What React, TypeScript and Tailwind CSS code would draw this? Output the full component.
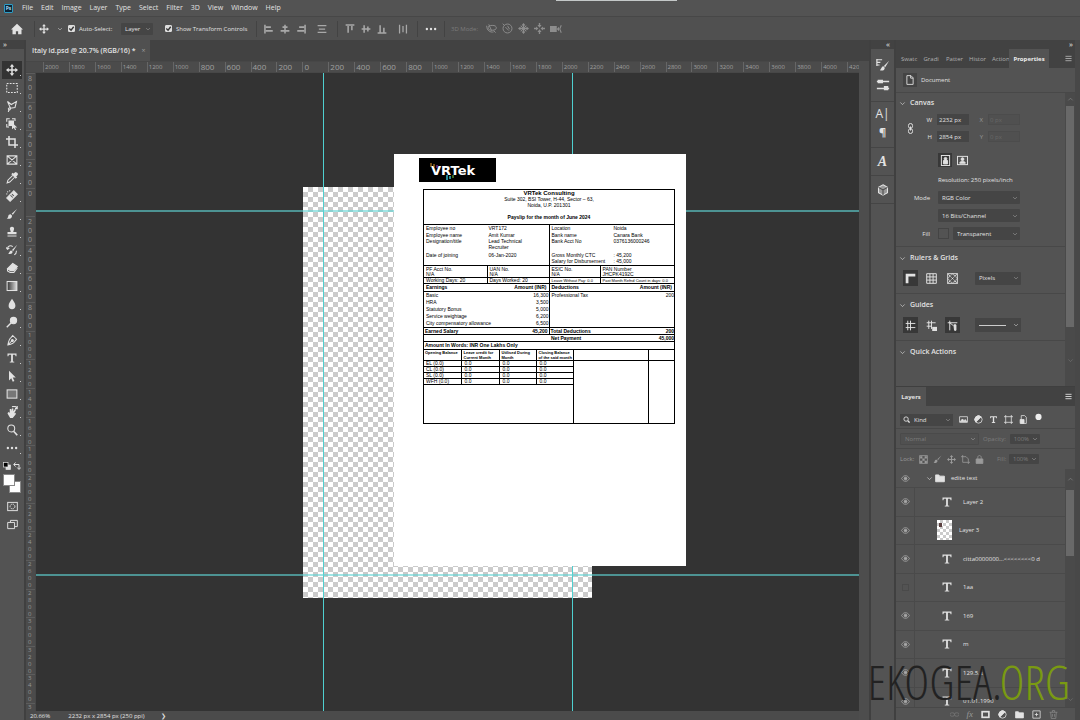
import { useState } from 'react';
import type { ReactNode } from 'react';
import clsx from 'clsx';

const MENUS = ['File', 'Edit', 'Image', 'Layer', 'Type', 'Select', 'Filter', '3D', 'View', 'Window', 'Help'];

const H_LABELS = Array.from({ length: 32 }, (_, i) => Math.abs(i * 200 - 2000));
const V_LABELS = Array.from({ length: 22 }, (_, i) => Math.abs(i * 200 - 800));

const Icon = ({ children, className = 'size-3' }: { children: ReactNode; className?: string }) => (
  <svg
    viewBox="0 0 16 16"
    className={clsx('shrink-0', className)}
    fill="none"
    stroke="currentColor"
    strokeWidth="1.4"
    aria-hidden="true"
  >
    {children}
  </svg>
);

const ChevronDown = ({ className = 'size-2' }: { className?: string }) => (
  <Icon className={className}>
    <path d="M3 5.5l5 5 5-5" />
  </Icon>
);

const Eye = () => (
  <Icon className="size-[9px]">
    <path d="M1 8c2-3.4 4.400-5 7-5s5 1.600 7 5c-2 3.400-4.400 5-7 5s-5-1.600-7-5z" />
    <circle cx="8" cy="8" r="2.400" fill="currentColor" />
  </Icon>
);

const moveIcon = (
  <g fill="currentColor" stroke="none">
    <path d="M8 0l3 3.600H9v3.400h3.400V5L16 8l-3.600 3V9H9v3.400h2L8 16l-3-3.600h2V9H3.600v2L0 8l3.600-3v2H7V3.600H5z" />
  </g>
);

const typeIcon = (
  <path fill="currentColor" stroke="none" d="M2 2h12v3.600h-1.200L12.200 3.800H9.200v8.700l1.800.5v1H5v-1l1.800-.5V3.800H3.800L3.200 5.600H2z" />
);

const brushIcon = (
  <g fill="currentColor" stroke="none">
    <path d="M15 1L7.600 7.500l1.500 1.600z" />
    <path d="M6.600 8.500c-2.300-.2-3.400 1-3.700 2.800C2.700 12.600 2 13.600 1 14c3 .9 7 .2 7.100-3.800z" />
  </g>
);

const TOOLS: { name: string; icon: ReactNode }[] = [
  { name: 'Move', icon: moveIcon },
  { name: 'Rectangular Marquee', icon: <rect x="1" y="2" width="14" height="12" strokeDasharray="2.400 1.600" /> },
  { name: 'Lasso', icon: <path d="M2 2l5 4 7-4-2 8-6 1-4-9zM6 11c-2-1-3.500 0-2.500 1.500S6 13 6 11zM4 13l-1 3" /> },
  {
    name: 'Object Selection',
    icon: (
      <>
        <path d="M1 5V1h4M8 1h4v3M1 8v4h3" />
        <rect x="4" y="4" width="6" height="6" fill="currentColor" />
        <path d="M8 6l7 6.500-3 .3L13.500 16 12 16l-1.500-3L8 15z" fill="currentColor" stroke="none" />
      </>
    ),
  },
  { name: 'Crop', icon: <path strokeWidth="2" d="M4 0v12h12M0 4h12v12" /> },
  { name: 'Frame', icon: <path d="M1.500 2.500h13v11h-13zM1.500 2.500l13 11M14.500 2.500l-13 11" /> },
  {
    name: 'Eyedropper',
    icon: (
      <>
        <path d="M9 4.500L2.500 11 1.500 14.500 5 13.500 11.500 7" />
        <path d="M8 3l5 5 1-1-1.200-1.200L15 3.500C15.500 2 14 .5 12.500 1L10.200 3.200 9 2z" fill="currentColor" />
      </>
    ),
  },
  {
    name: 'Healing Brush',
    icon: (
      <>
        <path d="M10.500 1l4.500 4.500L5.500 15 1 10.500z" fill="currentColor" />
        <path d="M1 6c0-3 2-5 5-5" strokeDasharray="1.500 1.500" />
        <path d="M6 7l3 3M8 5.500L10.500 8" stroke="#535353" />
      </>
    ),
  },
  { name: 'Brush', icon: brushIcon },
  {
    name: 'Clone Stamp',
    icon: <path fill="currentColor" stroke="none" d="M8 1c2 0 3.200 1.500 2.700 3.200L9.600 8H14v3H2V8h4.400L5.300 4.200C4.800 2.500 6 1 8 1zM2 12.500h12V14H2z" />,
  },
  {
    name: 'History Brush',
    icon: (
      <>
        <path d="M15 1L8 8l1.500 1.500zM7 8.500c-2 0-2 2-4 4.500 3 1 6 0 5.800-3z" fill="currentColor" stroke="none" />
        <path d="M9 3.500C6 1 2 3 2 6.500M0 4.500l2 2.500 2.500-1.500M14 9c0 3-1 4.500-3 5.500" />
      </>
    ),
  },
  {
    name: 'Eraser',
    icon: (
      <>
        <path d="M9 2l6 4-4.500 5.500H6L2 9z" fill="currentColor" />
        <path d="M2 9v3l3.500 2h5l4.500-6" />
      </>
    ),
  },
  {
    name: 'Gradient',
    icon: (
      <>
        <defs>
          <linearGradient id="gradTool">
            <stop offset="0" stopColor="#333" />
            <stop offset="1" stopColor="#ddd" />
          </linearGradient>
        </defs>
        <rect x="1.500" y="2" width="13" height="12" fill="url(#gradTool)" />
      </>
    ),
  },
  { name: 'Blur', icon: <path fill="currentColor" stroke="none" d="M8 1c2 3.400 4.500 6 4.500 9A4.500 4.500 0 0 1 8 15a4.500 4.500 0 0 1-4.500-5C3.500 7 6 4.400 8 1z" /> },
  {
    name: 'Dodge',
    icon: (
      <>
        <circle cx="10" cy="6" r="4.200" fill="currentColor" />
        <path strokeWidth="2" d="M7 9l-6 6" />
      </>
    ),
  },
  {
    name: 'Pen',
    icon: (
      <>
        <path d="M9 2l5 5-2 2.500c-1 2.500-4 4-9.500 5C3.500 9 4.500 6 7 4.500zM2.500 14.500L8 9" />
        <circle cx="8.500" cy="8.500" r="1.300" fill="currentColor" />
      </>
    ),
  },
  { name: 'Type', icon: typeIcon },
  { name: 'Path Selection', icon: <path fill="currentColor" stroke="none" d="M4 1l9 9H9l2.200 4.600L9 15.500 7 11l-3 3z" /> },
  { name: 'Rectangle', icon: <rect x="1.500" y="2.500" width="13" height="11" fill="#777" /> },
  {
    name: 'Rotate View',
    icon: (
      <>
        <path fill="currentColor" stroke="none" d="M3 8l2 1V4h2v3l1-4 2 .5L9.500 7 12 4l1.500 1L11 9.500l2-.5v2l-4 5H5.500L2 10z" />
        <path d="M8 1c3-1 6 0 7 2M15 0v3.500h-3" />
      </>
    ),
  },
  {
    name: 'Zoom',
    icon: (
      <>
        <circle cx="7" cy="6" r="4.600" />
        <path strokeWidth="2.200" d="M10.500 10l4.500 5" />
      </>
    ),
  },
  {
    name: 'More tools',
    icon: (
      <g fill="currentColor" stroke="none">
        <circle cx="2.500" cy="8" r="1.600" />
        <circle cx="8" cy="8" r="1.600" />
        <circle cx="13.500" cy="8" r="1.600" />
      </g>
    ),
  },
];

const Divider = () => <span className="h-4 w-px shrink-0 bg-[#434343]" />;

const Check = ({ id, label }: { id: string; label: string }) => {
  const [on, setOn] = useState(true);
  return (
    <div className="flex items-center gap-1">
      <span className="relative flex">
        <input
          id={id}
          type="checkbox"
          checked={on}
          onChange={(e) => setOn(e.target.checked)}
          className="size-[7px] appearance-none rounded-[1px] border border-[#ddd] checked:bg-[#ddd]"
        />
        {on && (
          <Icon className="pointer-events-none absolute inset-0 size-[7px] text-[#333]">
            <path d="M3 8l4 4 6-8" strokeWidth="3" />
          </Icon>
        )}
      </span>
      <label htmlFor={id} className="whitespace-nowrap">{label}</label>
    </div>
  );
};

const Select = ({ label, value, className }: { label: string; value: string; className: string }) => (
  <div className={clsx('relative flex items-center rounded-[1px] bg-[#454545]', className)}>
    <select aria-label={label} className="h-full w-full appearance-none bg-transparent pl-1 text-inherit outline-none">
      <option>{value}</option>
    </select>
    <ChevronDown className="pointer-events-none absolute right-[2px] size-[6px] text-[#aaa]" />
  </div>
);

const ToolButton = ({ label, children, active = false, className = 'size-4' }: { label: string; children: ReactNode; active?: boolean; className?: string }) => (
  <button aria-label={label} className={clsx('flex shrink-0 items-center justify-center', active && 'bg-[#383838]', className)}>
    {children}
  </button>
);

const MenuBar = () => (
  <header className="relative flex h-[17px] items-center border-b border-[#474747] text-[7px]">
    <span className="mx-1 flex size-[9px] items-center justify-center rounded-[1px] border border-[#2d9cc4] bg-[#0b2437] text-[5px] leading-none font-bold text-[#a9dcf5]">
      Ps
    </span>
    <nav className="flex gap-2 pl-[5px]">
      {MENUS.map((m) => (
        <button key={m}>{m}</button>
      ))}
    </nav>
    <span className="absolute top-0 right-[403px] h-px w-[121px] bg-[#c4c8c8]" />
  </header>
);

const OptionsBar = () => (
  <div className="flex h-[23px] items-center bg-[#505050] pl-[11px]">
    <ToolButton label="Home" className="w-3">
      <Icon>
        <path d="M8 1L0 8.500h2V15h4.500v-4h3v4H14V8.500h2z" fill="currentColor" stroke="none" />
      </Icon>
    </ToolButton>
    <span className="w-[11px]" />
    <Divider />
    <span className="flex w-[33px] items-center gap-2 pl-[4px]">
      <Icon className="size-[10px]">{moveIcon}</Icon>
      <ChevronDown className="size-[6px]" />
    </span>
    <div className="w-[53px]">
      <Check id="auto-select" label="Auto-Select:" />
    </div>
    <Select label="Auto-select target" value="Layer" className="h-3 w-8" />
    <div className="w-[103px] pl-3">
      <Check id="transform" label="Show Transform Controls" />
    </div>
    <Divider />
    <div className="flex w-[80px] items-center gap-[6px] pl-[7px] text-[#a8a8a8]">
      <Icon className="size-[10px]"><path d="M1.500 1v14M3 5h8M3 11h11" strokeWidth="2.500" /></Icon>
      <Icon className="size-[10px]"><path d="M8 1v14M4 5h8M1 11h14" strokeWidth="2.500" /></Icon>
      <Icon className="size-[10px]"><path d="M14.500 1v14M13 5H5M13 11H2" strokeWidth="2.500" /></Icon>
      <Icon className="ml-[5px] size-[10px]"><path d="M1 2.500h14M3 8h10M1 13.500h14" strokeWidth="2" /></Icon>
    </div>
    <Divider />
    <div className="flex w-[79px] items-center gap-[6px] pl-[7px] text-[#a8a8a8]">
      <Icon className="size-[10px]"><path d="M1 1.500h14M5 3v11M11 3v7" strokeWidth="2.500" /></Icon>
      <Icon className="size-[10px]"><path d="M1 8h14M5 2v12M11 4v8" strokeWidth="2.500" /></Icon>
      <Icon className="size-[10px]"><path d="M1 14.500h14M5 13V2M11 13V6" strokeWidth="2.500" /></Icon>
      <Icon className="ml-[5px] size-[10px]"><path d="M2.500 1v14M8 3v10M13.500 1v14" strokeWidth="2" /></Icon>
    </div>
    <Divider />
    <ToolButton label="More options" className="w-[26px]">
      <Icon>{TOOLS[21].icon}</Icon>
    </ToolButton>
    <Divider />
    <span className="w-[41px] pl-[6px] whitespace-nowrap text-[#7c7c7c]">3D Mode:</span>
    <div className="flex items-center gap-[5px] text-[#8d8d8d]">
      <Icon className="size-[11px]"><ellipse cx="9" cy="7" rx="6" ry="3.500" /><path d="M1 4c0 7 5 10 10 9M4 2l4 9M11 11l3 3" /></Icon>
      <Icon className="size-[11px]"><circle cx="8" cy="8" r="6.500" /><path d="M5 6l5 5M8 4l3 5M1 1l3 3" /></Icon>
      <Icon className="size-[11px]">{moveIcon}<path d="M4 4l8 8M12 4l-8 8" /></Icon>
      <Icon className="size-[11px]"><g fill="currentColor" stroke="none"><path d="M8 7L5 3h2V0h2v3h2zM8 9l3 4H9v3H7v-3H5zM6.500 8L3 11V9H0V7h3V5zM9.500 8L13 5v2h3v2h-3v2z" /></g></Icon>
      <Icon className="size-[12px]"><path d="M0 4h9v8H0zM9 8l3-3v6z" fill="currentColor" stroke="none" /><path d="M15 3l-2 5 2 5" /></Icon>
    </div>
  </div>
);

const Toolbar = () => {
  const [tool, setTool] = useState('Move');
  return (
    <aside className="flex w-[26px] shrink-0 flex-col border-r-2 border-[#404040]">
      <div className="h-[9px] bg-[#424242] pl-[3px] text-[8px] leading-[8px]">»</div>
      <div className="flex flex-col items-center pt-3">
        {TOOLS.map((t) => (
          <button
            key={t.name}
            aria-label={t.name}
            onClick={() => setTool(t.name)}
            className={clsx('relative flex h-[18px] w-5 items-center justify-center', tool === t.name && 'bg-[#333]')}
          >
            <Icon className="size-[12px]">{t.icon}</Icon>
            <span className="absolute right-px bottom-[3px] size-px bg-[#ccc]" />
          </button>
        ))}
      </div>
      <div className="flex justify-between px-[3px] pt-[5px]">
        <Icon className="size-[8px]">
          <rect x="6" y="6" width="9" height="9" fill="#ddd" />
          <rect x="1" y="1" width="9" height="9" fill="#000" />
        </Icon>
        <Icon className="size-[8px]"><path d="M2 5h10v9M5 1L1.500 5 5 9M8.500 11l3.500 4 3.500-4" strokeWidth="2" /></Icon>
      </div>
      <div className="relative ml-[3px] h-5">
        <button aria-label="Background color" className="absolute top-[11px] left-[6px] size-3 border border-[#888] bg-white" />
        <button aria-label="Foreground color" className="absolute top-[4px] left-0 size-3 border border-[#888] bg-white" />
      </div>
      <div className="flex flex-col items-center gap-[7px] pt-[11px]">
        <Icon className="size-[11px]"><rect x="1" y="2" width="14" height="12" /><circle cx="8" cy="8" r="3.500" strokeDasharray="2 1" /></Icon>
        <Icon className="size-[11px]"><path d="M5 5V2h10v9h-4M1 5h10v9H1z" /></Icon>
      </div>
    </aside>
  );
};

const HRuler = () => (
  <div className="flex h-3 overflow-hidden border-y border-[#474747] bg-[#4b4b4b] pl-[17px] text-[#a0a0a0]">
    {H_LABELS.map((n, i) => (
      <span
        key={i}
        className={clsx(
          'flex min-w-0 basis-0 items-center overflow-hidden border-l border-[#666] pl-px leading-none',
          n >= 1000 ? 'text-[6px]' : 'text-[8px]',
          i === H_LABELS.length - 1 ? 'grow-[11]' : 'grow-[26]'
        )}
      >
        {n}
      </span>
    ))}
  </div>
);

const VRuler = () => (
  <div className="flex w-[10px] shrink-0 flex-col overflow-hidden border-r border-[#474747] bg-[#4b4b4b] text-[7px] text-[#979797]">
    {V_LABELS.map((n, i) => (
      <span key={i} className="flex min-h-0 grow-4 basis-0 flex-col items-start border-t border-[#5c5c5c] pl-[2px]">
        {String(n).split('').map((d, j) => (
          <span key={j} className={n >= 1000 ? 'text-[6px] leading-[7px]' : 'leading-[9px]'}>{d}</span>
        ))}
      </span>
    ))}
    <span className="flex min-h-0 grow basis-0 border-t border-[#5c5c5c] pl-[2px] text-[6px] leading-[7px]">3</span>
  </div>
);

const EMPLOYEE = [
  ['Employee no', 'VRT172', 'Location', 'Noida'],
  ['Employee name', 'Amit Kumar', 'Bank name', 'Canara Bank'],
  ['Designation/title', 'Lead Technical Recruiter', 'Bank Acct No', '0376136000246'],
  ['Date of joining', '06-Jan-2020', 'Gross Monthly CTC', ': 45,200'],
  ['', '', 'Salary for Disbursement', ': 45,000'],
];

const EARNINGS = [
  ['Basic', '16,300', 'Professional Tax', '200'],
  ['HRA', '3,500', '', ''],
  ['Statutory Bonus', '5,000', '', ''],
  ['Service weightage', '6,200', '', ''],
  ['City compensatory allowance', '6,500', '', ''],
];

const LEAVES = ['EL (0.0)', 'CL (0.0)', 'SL (0.0)', 'WFH (0.0)'];

const Payslip = () => (
  <article className="absolute top-[81px] left-[358px] h-[412px] w-[292px] bg-white px-[25px] pt-1 font-['Liberation_Sans',sans-serif] text-[5px] leading-[6px] font-normal text-black">
    <svg viewBox="0 0 77 24" className="h-6 w-[77px] bg-black">
      <text x="12" y="17" fontSize="13" fill="#fff" fontFamily="DejaVu Sans, sans-serif" fontWeight="bold">VRTek</text>
      <path d="M12 5v4M15 6v3" stroke="#d93" />
      <path d="M18 7v3" stroke="#a4c" />
      <path d="M28 17v5M31 18v3" stroke="#3bc" strokeWidth="1.500" />
      <path d="M34 17v3" stroke="#7c4" />
    </svg>
    <div className="mt-[7px] ml-1 flex h-[235px] w-[252px] flex-col border border-black">
      <div className="h-[34px] text-center leading-[6px]">
        <h2 className="text-[6px] font-bold">VRTek Consulting</h2>
        <p>Suite 302, BSI Tower, H-44, Sector – 63,</p>
        <p>Noida, U.P. 201301</p>
        <p className="mt-[6px] font-bold">Payslip for the month of June 2024</p>
      </div>
      <table className="h-[41px] w-full table-fixed border-t border-black">
        <tbody>
          {EMPLOYEE.map((row, i) => (
            <tr key={i} className="align-top">
              {row.map((c, j) => (
                <td key={j} className={clsx('pl-[2px]', j === 1 && 'pr-5', j % 2 === 0 && 'whitespace-nowrap', j === 2 && 'border-l border-black')}>
                  {c}
                </td>
              ))}
            </tr>
          ))}
        </tbody>
      </table>
      <table className="w-full table-fixed border-collapse border-y border-black">
        <tbody className="whitespace-nowrap">
          <tr className="h-3 leading-[5px]">
            <td className="w-[63px] pl-[2px]">PF Acct No.<br />N/A</td>
            <td className="w-[62px] border-x border-black pl-[2px]">UAN No.<br />N/A</td>
            <td className="w-[51px] border-r border-black pl-[2px]">ESIC No.<br />N/A</td>
            <td className="pl-[2px]">PAN Number<br />JHCPK4192C</td>
          </tr>
          <tr className="h-[6px] border-t border-black leading-[5px]">
            <td className="pl-[2px]">Working Days: 20</td>
            <td className="border-x border-black pl-[2px]">Days Worked: 20</td>
            <td className="border-r border-black pl-[2px] text-[4px]">Leave Without Pay: 0.0</td>
            <td className="pl-[2px] text-[4px]">Past Month Refnd Count in days: 0.0</td>
          </tr>
        </tbody>
      </table>
      <table className="w-full table-fixed border-collapse">
        <thead>
          <tr className="h-[7px] border-b border-black">
            <th className="w-[75px] pl-[2px] text-left">Earnings</th>
            <th className="w-[50px] pr-[2px] text-right">Amount (INR)</th>
            <th className="border-l border-black pl-[2px] text-left">Deductions</th>
            <th className="w-[50px] pr-[2px] text-right">Amount (INR)</th>
          </tr>
        </thead>
        <tbody>
          {EARNINGS.map((row, i) => (
            <tr key={i} className="h-[7px] leading-[7px]">
              <td className="pl-[2px] whitespace-nowrap">{row[0]}</td>
              <td className="text-right">{row[1]}</td>
              <td className="border-l border-black pl-[2px]">{row[2]}</td>
              <td className="text-right">{row[3]}</td>
            </tr>
          ))}
          <tr className="h-[7px] border-y border-black font-bold">
            <td className="pl-px">Earned Salary</td>
            <td className="pr-px text-right">45,200</td>
            <td className="border-l border-black pl-px">Total Deductions</td>
            <td className="text-right">200</td>
          </tr>
          <tr className="h-[7px] border-b border-black font-bold">
            <td colSpan={2} />
            <td className="pl-[2px]">Net Payment</td>
            <td className="text-right">45,000</td>
          </tr>
        </tbody>
      </table>
      <p className="h-[7px] pl-px leading-[7px] font-bold">Amount In Words: INR One Lakhs Only</p>
      <table className="w-full grow table-fixed border-collapse">
        <tbody>
          <tr className="h-[11px] border-y border-black align-top text-[4px] leading-[5px] font-bold">
            <td className="w-[37px] border-r border-black pl-px">Opening Balance</td>
            <td className="w-[38px] border-r border-black pl-[2px]">Leave credit for Current Month</td>
            <td className="w-[37px] border-r border-black pl-[2px]">Utilised During Month</td>
            <td className="w-[37px] border-r border-black pl-[2px]">Closing Balance of the said month</td>
            <td className="w-[75px] border-r border-black" />
            <td />
          </tr>
          {LEAVES.map((l) => (
            <tr key={l} className="h-[6px] leading-[5px]">
              <td className="border-r border-b border-black pl-[2px]">{l}</td>
              <td className="border-r border-b border-black pl-[3px]">0.0</td>
              <td className="border-r border-b border-black pl-[3px]">0.0</td>
              <td className="border-r border-b border-black pl-[3px]">0.0</td>
              <td className="border-r border-black" />
              <td />
            </tr>
          ))}
          <tr>
            <td colSpan={4} className="border-r border-black" />
            <td className="border-r border-black" />
            <td />
          </tr>
        </tbody>
      </table>
    </div>
  </article>
);

const Workspace = () => (
  <main className="flex min-w-0 grow flex-col bg-[#424242]">
    <div className="flex h-[21px]">
      <button className="flex h-full w-[124px] items-center gap-[6px] bg-[#505050] pl-[6px] text-[7px] font-semibold whitespace-nowrap">
        Italy id.psd @ 20.7% (RGB/16) *
        <span className="font-normal text-[#999]">×</span>
      </button>
    </div>
    <div className="flex min-h-0 grow">
      <div className="flex min-w-0 grow flex-col">
        <HRuler />
        <div className="flex min-h-0 grow">
          <VRuler />
          {/* canvas */}
          <div className="relative min-w-0 grow overflow-hidden bg-[#333]">
            <div className="absolute top-[114px] left-[267px] h-[411px] w-[289px] bg-[conic-gradient(#cbcbcb_25%,#fff_0_50%,#cbcbcb_0_75%,#fff_0)] bg-size-[10px_10px]" />
            <div className="absolute top-0 bottom-0 left-[287px] w-px bg-[#4fd0d0]" />
            <div className="absolute top-0 bottom-0 left-[536px] w-px bg-[#4fd0d0]" />
            <div className="absolute top-[137px] right-0 left-0 h-[2px] bg-[#5fd3d3]/60" />
            <div className="absolute top-[501px] right-0 left-0 h-[2px] bg-[#5fd3d3]/60" />
            <Payslip />
          </div>
        </div>
        <footer className="flex h-[9px] items-center gap-[18px] bg-[#4b4b4b] pl-1 text-[6px] leading-none">
          <span>20.66%</span>
          <span className="flex gap-4">2232 px x 2854 px (250 ppi) <span>❯</span></span>
        </footer>
      </div>
      <div className="w-[10px] shrink-0 bg-[#4d4d4d]" />
    </div>
  </main>
);

const Dock = () => (
  <aside className="flex w-[27px] shrink-0 flex-col border-x-2 border-[#404040]">
    <div className="h-[9px] bg-[#424242] pr-1 text-right text-[8px] leading-[8px]">«</div>
    <div className="flex flex-col items-center gap-[6px] border-b border-[#454545] py-[9px]">
      <Icon className="size-[14px]">
        <path d="M1 2h6M1 5h4M1 8h3M1 1v8" />
        <path d="M15 3l-6 6 1.500 1.500zM8.500 9.500c-2 0-2 2-4 4.500 3 1 5.500 0 5.500-3z" fill="currentColor" stroke="none" />
      </Icon>
      <Icon className="size-[14px]"><path d="M1 4h14M1 12h14" strokeWidth="1.800" /><path d="M2 2h6v4H2zM9 9h5v5H9z" fill="currentColor" stroke="none" /></Icon>
    </div>
    <div className="flex flex-col items-center gap-[4px] border-b border-[#454545] pt-[5px] pb-2">
      <span className="flex h-[14px] items-center text-[12px]">A|</span>
      <span className="flex h-[14px] items-center text-[11px] font-bold">¶</span>
    </div>
    <div className="flex h-7 items-center justify-center border-b border-[#454545] font-['Liberation_Serif',serif] text-[14px] font-bold italic">A</div>
    <div className="flex h-7 items-center justify-center border-b border-[#454545]">
      <Icon><path d="M8 1l6 3.500v7L8 15l-6-3.500v-7z" fill="#999" /><path d="M2 4.500L8 8l6-3.500M8 8v7" stroke="#4a4a4a" /></Icon>
    </div>
  </aside>
);

const SectionTitle = ({ children }: { children: ReactNode }) => (
  <h3 className="flex items-center gap-1 text-[7px] font-semibold">
    <ChevronDown className="size-[7px]" />
    {children}
  </h3>
);

const Field = ({ label, value, off = false }: { label: string; value: string; off?: boolean }) => (
  <label className="flex items-center gap-[5px]">
    <span className={clsx('w-[7px] text-right', off && 'text-[#999]')}>{label}</span>
    <input
      defaultValue={value}
      disabled={off}
      className={clsx('h-[11px] w-8 border px-px', off ? 'border-[#4c4c4c] bg-[#505050] text-[#686868]' : 'border-[#454545] bg-[#454545]')}
    />
  </label>
);

const PANEL_TABS = ['Swatc', 'Gradi', 'Patter', 'Histor', 'Action'];

const Burger = () => (
  <Icon className="mr-[3px] ml-auto size-[7px]"><path d="M1 3h14M1 8h14M1 13h14" strokeWidth="2" /></Icon>
);

const Scrollbar = ({ arrow, thumb, foot }: { arrow: string; thumb: string; foot: string }) => (
  <div className="flex w-[10px] shrink-0 flex-col items-center bg-[#4a4a4a]">
    <Icon className={clsx('size-[7px] text-[#888]', arrow)}><path d="M3 10l5-5 5 5" /></Icon>
    <span className={clsx('w-2 shrink-0 bg-[#696969]', thumb)} />
    <ChevronDown className={clsx('mt-auto size-[7px] text-[#777]', foot)} />
  </div>
);

const Properties = () => (
  <section className="flex h-[338px] flex-col border-b border-[#3f3f3f]">
    <div className="flex h-[19px] items-center bg-[#424242] text-[#b0b0b0]">
      <div className="flex w-[113px] gap-[6px] overflow-hidden pl-[5px]">
        {PANEL_TABS.map((t) => (
          <button key={t} className="w-[17px] text-left">{t}</button>
        ))}
      </div>
      <button className="h-full w-10 bg-[#535353] font-bold text-[#eee]">Properties</button>
      <Burger />
    </div>
    <div className="flex h-[25px] items-center gap-[4px] border-b border-[#484848] pl-[7px]">
      <span className="flex size-[14px] items-center justify-center bg-[#444]">
        <Icon className="size-[10px]"><path d="M3 1h6.500L13 4.500V15H3zM9 1v4h4" /></Icon>
      </span>
      Document
    </div>
    <div className="flex min-h-0 grow">
      <div className="min-w-0 grow">
        <div className="h-[154px] border-b border-[#484848] pt-[5px] pl-[3px]">
          <SectionTitle>Canvas</SectionTitle>
          <div className="mt-[6px] flex items-center gap-[9px] pl-[6px]">
            <Icon className="size-[11px]"><rect x="5" y="0.700" width="6" height="7" rx="3" /><rect x="5" y="8.300" width="6" height="7" rx="3" /><path d="M8 5v6" /></Icon>
            <div className="flex gap-[7px]">
              <div className="flex flex-col gap-[6px]">
                <Field label="W" value="2232 px" />
                <Field label="H" value="2854 px" />
              </div>
              <div className="flex flex-col gap-[6px]">
                <Field label="X" value="0 px" off />
                <Field label="Y" value="0 px" off />
              </div>
            </div>
          </div>
          <div className="mt-[11px] flex gap-[2px] pl-[39px]">
            <ToolButton label="Portrait" active className="size-[14px]">
              <Icon className="size-[11px]"><rect x="2" y="0.700" width="12" height="14.600" /><circle cx="8" cy="5.500" r="2" fill="currentColor" /><path d="M5 8h6v5H5z" fill="currentColor" /></Icon>
            </ToolButton>
            <ToolButton label="Landscape" className="h-[14px] w-4">
              <Icon className="size-[11px]"><rect x="0.700" y="2" width="14.600" height="12" /><circle cx="8" cy="6" r="2" fill="currentColor" /><path d="M4 12c0-4 8-4 8 0z" fill="currentColor" /></Icon>
            </ToolButton>
          </div>
          <p className="mt-2 pl-[39px]">Resolution: 250 pixels/inch</p>
          <div className="mt-[6px] grid grid-cols-[31px_82px] items-center gap-x-2 gap-y-[5px]">
            <span className="text-right">Mode</span>
            <Select label="Color mode" value="RGB Color" className="h-[13px] w-full" />
            <span />
            <Select label="Bit depth" value="16 Bits/Channel" className="h-[13px] w-full" />
            <span className="text-right">Fill</span>
            <div className="flex items-center gap-1">
              <button aria-label="Fill color" className="size-[11px] border border-[#444]" />
              <Select label="Fill" value="Transparent" className="h-[13px] grow" />
            </div>
          </div>
        </div>
        <div className="h-[47px] border-b border-[#484848] pt-[6px] pl-[3px]">
          <SectionTitle>Rulers &amp; Grids</SectionTitle>
          <div className="mt-[7px] flex items-center gap-[6px] pl-1">
            <ToolButton label="Rulers" active className="h-4 w-[15px]"><Icon className="size-[11px]"><path d="M3 15V3h12" strokeWidth="4" /></Icon></ToolButton>
            <ToolButton label="Grid" className="h-4 w-[15px]"><Icon className="size-[11px]"><path d="M1 1h14v14H1zM1 5.700h14M1 10.300h14M5.700 1v14M10.300 1v14" /></Icon></ToolButton>
            <ToolButton label="Transparency grid" className="h-4 w-[15px]"><Icon className="size-[11px]"><rect x="1" y="1" width="14" height="14" /><path d="M1 1l14 14M15 1L1 15M8 1l7 7-7 7-7-7z" strokeDasharray="2 1" /></Icon></ToolButton>
            <Select label="Units" value="Pixels" className="ml-[9px] h-[13px] w-[46px]" />
          </div>
        </div>
        <div className="h-[47px] border-b border-[#484848] pt-[6px] pl-[3px]">
          <SectionTitle>Guides</SectionTitle>
          <div className="mt-[7px] flex items-center gap-[6px] pl-1">
            <ToolButton label="Show guides" active className="h-4 w-[15px]"><Icon className="size-[11px]"><path d="M4 1v14M8 1v14M1 5h14M1 11h14" /></Icon></ToolButton>
            <ToolButton label="Lock guides" className="h-4 w-[15px]"><Icon className="size-[11px]"><path d="M4 1v12M8 1v12M1 4h13M1 9h7" /><path d="M9 10h7v6H9z" fill="currentColor" stroke="none" /></Icon></ToolButton>
            <ToolButton label="Smart guides" active className="h-4 w-[15px]"><Icon className="size-[11px]"><path d="M4 1v14M1 4h14M4 4l5 4" /><path d="M10 7h3v8h-2z" fill="currentColor" /></Icon></ToolButton>
            <div className="relative ml-[9px] flex h-[14px] w-[46px] items-center bg-[#454545]">
              <button aria-label="Guide style" className="ml-1 h-px w-[27px] bg-[#ccc]" />
              <ChevronDown className="absolute right-[2px] size-[6px]" />
            </div>
          </div>
        </div>
        <div className="pt-[6px] pl-[3px]">
          <SectionTitle>Quick Actions</SectionTitle>
        </div>
      </div>
      <Scrollbar arrow="my-[3px]" thumb="h-[221px]" foot="mb-[22px]" />
    </div>
  </section>
);

const LAYERS = [
  { name: 'Layer 2', visible: true },
  { name: 'Layer 3', visible: true, thumb: true },
  { name: 'citta0000000...<<<<<<<<0 d', visible: true },
  { name: '1aa', visible: false },
  { name: '169', visible: true },
  { name: 'm', visible: true },
  { name: '129.5.s', visible: true },
  { name: '01.01.1990', visible: true },
];

const Layers = () => {
  const [layers, setLayers] = useState(LAYERS);

  const toggle = (i: number) =>
    setLayers((prev) => prev.map((l, j) => (j === i ? { ...l, visible: !l.visible } : l)));

  return (
    <section className="flex min-h-0 grow flex-col">
      <div className="flex h-[19px] items-center bg-[#424242]">
        <button className="h-full w-[30px] bg-[#535353] font-bold">Layers</button>
        <Burger />
      </div>
      <div className="flex h-[23px] items-center border-b border-[#484848] pt-[5px] pl-1">
        <div className="flex w-[53px] items-center bg-[#454545] pl-[3px]">
          <Icon className="size-[7px]"><circle cx="7" cy="7" r="5" strokeWidth="2" /><path d="M11 11l4 4" strokeWidth="3" /></Icon>
          <Select label="Filter kind" value="Kind" className="h-3 grow" />
        </div>
        <div className="flex items-center gap-[6px] pl-[6px]">
          <Icon className="size-[9px]"><path d="M1 3h14v10H1z" /><path d="M2 12l4-5 3 3 2-2 3 4z" fill="currentColor" /></Icon>
          <Icon className="size-[9px]"><circle cx="8" cy="8" r="6.500" /><path d="M12.600 3.400A6.500 6.500 0 1 0 3.400 12.600z" fill="currentColor" /></Icon>
          <Icon className="size-[9px]">{typeIcon}</Icon>
          <Icon className="size-[9px]"><path d="M3 0v16M13 0v16M0 3h16M0 13h16" /></Icon>
          <Icon className="size-[9px]"><path d="M4 1h6l3 3v11H4z" /><path d="M2 8h7v7H2z" fill="currentColor" /></Icon>
          <Icon className="mb-1 size-[9px]"><circle cx="8" cy="7" r="5.500" fill="#eee" stroke="none" /></Icon>
        </div>
      </div>
      <div className="flex h-5 items-center gap-[4px] border-b border-[#484848] pl-1 text-[#7d7d7d]">
        <Select label="Blend mode" value="Normal" className="h-3 w-[79px] border border-[#4a4a4a] bg-[#505050]" />
        <span>Opacity:</span>
        <Select label="Opacity" value="100%" className="h-[10px] w-[30px]" />
      </div>
      <div className="flex h-5 items-center pl-1 text-[#9a9a9a]">
        <span className="w-[19px]">Lock:</span>
        <div className="flex w-[78px] items-center gap-[5px]">
          <Icon className="size-[9px]"><path d="M1 1h14v14H1z" /><path d="M2 2h4v4H2zM10 2h4v4h-4zM6 6h4v4H6zM2 10h4v4H2zM10 10h4v4h-4z" fill="currentColor" stroke="none" /></Icon>
          <Icon className="size-[9px]">{brushIcon}</Icon>
          <Icon className="size-[9px]">{moveIcon}</Icon>
          <Icon className="size-[9px]"><path d="M3 0v13h13M0 3h9l4 4v9" /></Icon>
          <Icon className="size-[9px]"><path d="M2 7h12v8H2z" fill="currentColor" /><path d="M5 7V4c0-4 6-4 6 0v3" /></Icon>
        </div>
        <span className="w-3 text-[#7d7d7d]">Fill:</span>
        <Select label="Fill opacity" value="100%" className="h-[10px] w-[30px] text-[#7d7d7d]" />
      </div>
      <div className="flex h-[238px] shrink-0 overflow-hidden">
        <div className="min-w-0 grow">
          <div className="flex h-[19px] items-center border-b border-[#4a4a4a]">
            <span className="flex w-[19px] justify-center text-[#aaa]"><Eye /></span>
            <ChevronDown className="ml-[11px] size-[7px]" />
            <Icon className="mx-[2px] size-[10px]"><path d="M1 3h5l1.500 2H15v9H1z" fill="currentColor" /></Icon>
            <span className="pl-[4px]">edite text</span>
          </div>
          <ul className="grid h-[228px] auto-rows-fr">
            {layers.map((l, i) => (
              <li key={l.name} className="flex items-center border-b border-[#4a4a4a]">
                <button
                  aria-label={`Toggle ${l.name}`}
                  onClick={() => toggle(i)}
                  className="flex h-full w-[19px] items-center justify-center border-r border-[#4a4a4a] text-[#aaa]"
                >
                  {l.visible ? <Eye /> : <span className="size-[7px] border border-[#4a4a4a]" />}
                </button>
                {l.thumb ? (
                  <span className="ml-[22px] h-5 w-[15px] bg-[conic-gradient(#cbcbcb_25%,#fff_0_50%,#cbcbcb_0_75%,#fff_0)] bg-size-[6px_6px]">
                    <span className="mt-[3px] ml-[2px] block h-1 w-[3px] bg-[#5a3f3f]" />
                  </span>
                ) : (
                  <Icon className="ml-[26px] size-3">{typeIcon}</Icon>
                )}
                <span className={clsx('whitespace-nowrap', l.thumb ? 'pl-[7px]' : 'pl-[10px]')}>{l.name}</span>
              </li>
            ))}
          </ul>
        </div>
        <Scrollbar arrow="my-[7px]" thumb="h-[66px]" foot="mb-1" />
      </div>
      <div className="flex grow items-center justify-end gap-2 border-t border-[#484848] pr-[17px]">
        <Icon className="size-[9px] text-[#777]"><rect x="0" y="5" width="8" height="6" rx="3" /><rect x="8" y="5" width="8" height="6" rx="3" /></Icon>
        <span className="font-['Liberation_Serif',serif] text-[9px] leading-none text-[#999] italic">fx</span>
        <Icon className="size-[9px]"><rect x="2" y="3" width="12" height="10" strokeWidth="3" /></Icon>
        <Icon className="size-[9px]"><circle cx="8" cy="8" r="6.500" /><path d="M12.600 3.400A6.500 6.500 0 1 0 3.400 12.600z" fill="currentColor" /></Icon>
        <Icon className="size-[9px]"><path d="M1 3h5l1.500 2H15v9H1z" fill="currentColor" /></Icon>
        <Icon className="size-[9px]"><path d="M1.500 1.500h13v13h-13zM8 5v6M5 8h6" /></Icon>
        <Icon className="size-[9px] text-[#888]"><path d="M1 4h14M6 4V1h4v3M3 4l1 11h8l1-11M6 7v5M10 7v5" /></Icon>
      </div>
    </section>
  );
};

export default function App() {
  return (
    <div className="relative flex h-screen flex-col overflow-hidden bg-[#535353] font-['Open_Sans','Noto_Sans',sans-serif] text-[6px] leading-[10px] font-medium text-[#e2e2e2]">
      <MenuBar />
      <OptionsBar />
      <div className="flex min-h-0 grow">
        <Toolbar />
        <Workspace />
        <Dock />
        <aside className="flex w-[184px] shrink-0 flex-col border-r-[5px] border-[#484848]">
          <div className="h-[9px] shrink-0 bg-[#424242] pr-[2px] text-right text-[8px] leading-[8px]">»</div>
          <Properties />
          <Layers />
        </aside>
      </div>
      <div className="pointer-events-none absolute right-[10px] bottom-[14px] font-['Noto_Sans_Condensed_Light','Open_Sans_Condensed_Light','Open_Sans_Condensed','Lato',sans-serif] text-[48px] leading-[48px] font-light text-[#222]">
        EKOGEA.<span className="text-[#7a9a12]">ORG</span>
      </div>
    </div>
  );
}
